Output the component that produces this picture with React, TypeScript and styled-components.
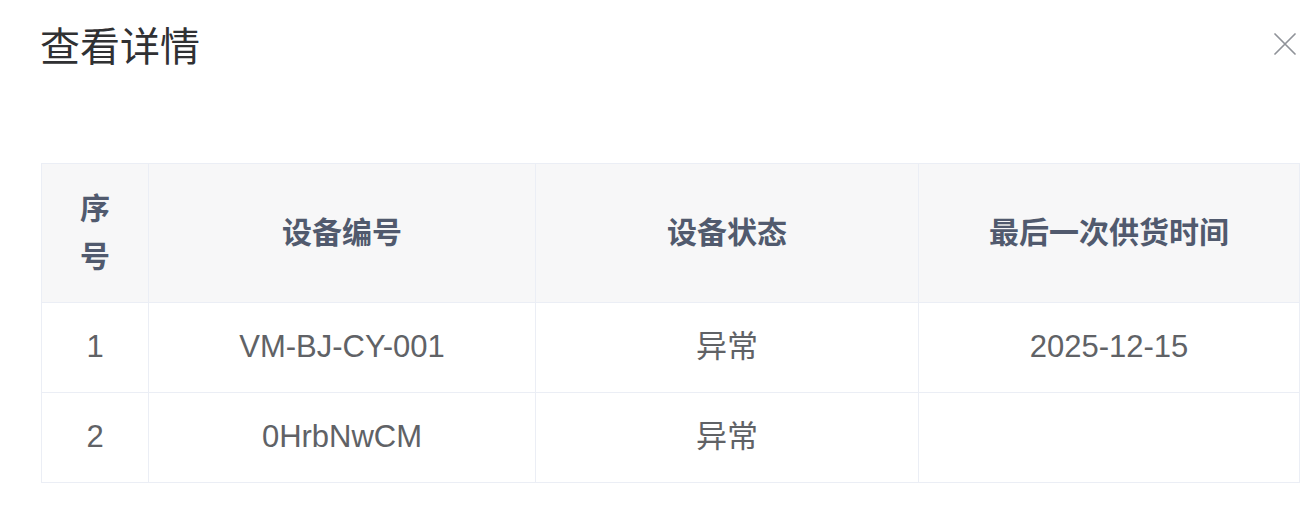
import styled, { createGlobalStyle } from "styled-components";

const GlobalStyle = createGlobalStyle`
    body {
        margin: 0;
        background: #fff;
        font-family: "Liberation Sans", "Noto Sans CJK SC", sans-serif;
    }
`;

const Dialog = styled.div`
    padding: 0 16px 0 40px;
`;

const Header = styled.div`
    display: flex;
    align-items: center;
    justify-content: space-between;
    height: 88px;
`;

const Title = styled.h2`
    margin: 0;
    font-family: "Noto Sans CJK SC", sans-serif;
    font-size: 40px;
    font-weight: 400;
    color: #303133;
    line-height: 1;
`;

const CloseButton = styled.button`
    display: flex;
    padding: 0;
    margin-right: 4px;
    border: none;
    background: none;
    color: #909399;
    cursor: pointer;
`;

const Body = styled.div`
    padding-top: 75px;
    padding-left: 1px;
`;

const Table = styled.table`
    width: 100%;
    border-collapse: collapse;
    border: 1px solid #ebeef5;
    table-layout: fixed;
`;

const HeadCell = styled.th`
    padding: 21px 10px;
    background: #f7f7f8;
    border: 1px solid #ebeef5;
    color: #515a6e;
    font-family: "Liberation Sans", "Noto Sans CJK SC", sans-serif;
    font-size: 30px;
    font-weight: 700;
    line-height: 48px;
    text-align: center;
`;

const HeadText = styled.div<{ $narrow?: boolean }>`
    margin: 0 auto;
    width: ${(p) => (p.$narrow ? "1em" : "auto")};
`;

const Cell = styled.td`
    padding: 20px 10px 21px;
    border: 1px solid #ebeef5;
    color: #606266;
    font-size: 31px;
    line-height: 48px;
    text-align: center;
    white-space: nowrap;
`;

const devices = [
    { no: 1, code: "VM-BJ-CY-001", status: "异常", lastSupply: "2025-12-15" },
    { no: 2, code: "0HrbNwCM", status: "异常", lastSupply: "" },
];

function CloseIcon() {
    return (
        <svg width="22" height="22" viewBox="0 0 22 22" fill="none">
            <path
                d="M1 1L21 21M21 1L1 21"
                stroke="currentColor"
                strokeWidth="1.7"
                strokeLinecap="round"
            />
        </svg>
    );
}

export default function App() {
    return (
        <>
            <GlobalStyle />
            <Dialog>
                <Header>
                    <Title>查看详情</Title>
                    <CloseButton aria-label="关闭">
                        <CloseIcon />
                    </CloseButton>
                </Header>
                <Body>
                    <Table>
                        <colgroup>
                            <col style={{ width: 107 }} />
                            <col style={{ width: 387 }} />
                            <col style={{ width: 383 }} />
                            <col />
                        </colgroup>
                        <thead>
                            <tr>
                                <HeadCell>
                                    <HeadText $narrow>序号</HeadText>
                                </HeadCell>
                                <HeadCell>
                                    <HeadText>设备编号</HeadText>
                                </HeadCell>
                                <HeadCell>
                                    <HeadText>设备状态</HeadText>
                                </HeadCell>
                                <HeadCell>
                                    <HeadText>最后一次供货时间</HeadText>
                                </HeadCell>
                            </tr>
                        </thead>
                        <tbody>
                            {devices.map((d) => (
                                <tr key={d.no}>
                                    <Cell>{d.no}</Cell>
                                    <Cell>{d.code}</Cell>
                                    <Cell>{d.status}</Cell>
                                    <Cell>{d.lastSupply}</Cell>
                                </tr>
                            ))}
                        </tbody>
                    </Table>
                </Body>
            </Dialog>
        </>
    );
}
